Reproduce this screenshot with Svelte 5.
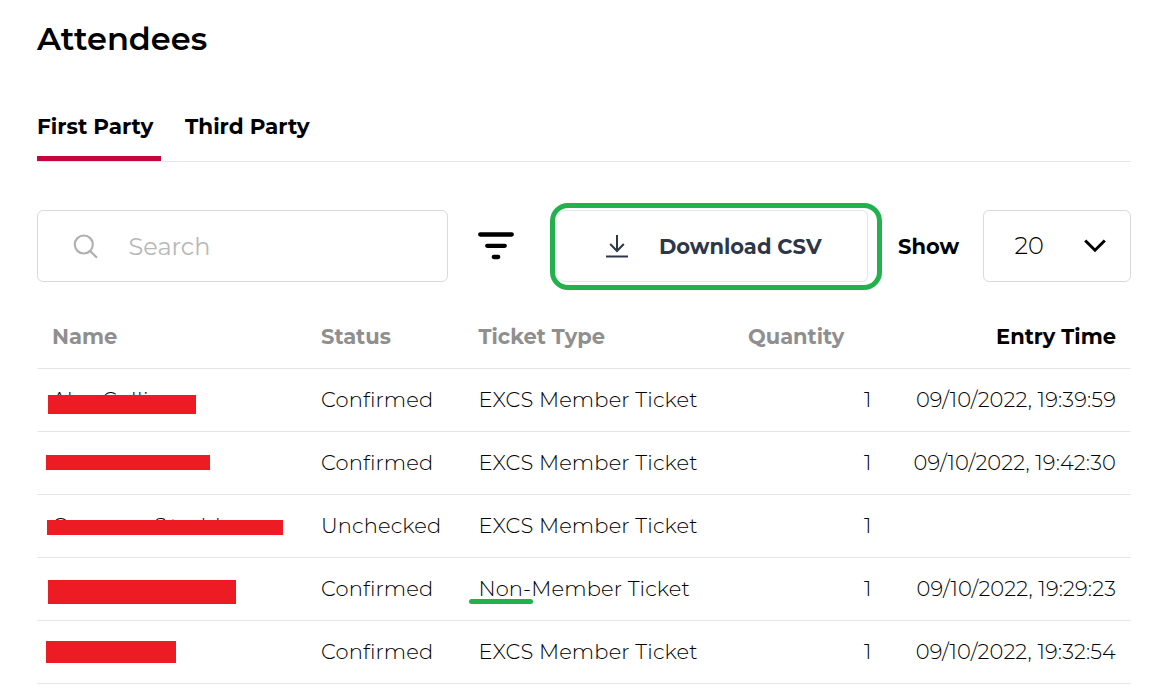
<script>
  const columns = [
    { label: 'Name', width: 269 },
    { label: 'Status', width: 157.5 },
    { label: 'Ticket Type', width: 269.5 },
    { label: 'Quantity', width: 154 },
    { label: 'Entry Time', width: 244 }
  ];

  const rows = [
    {
      mask: { x: 11, y: 26, w: 148, h: 19 },
      parts: [['A', 15], ['l', 35], ['C', 29], ['l', 6], ['l', 6], ['i', 8]],
      status: 'Confirmed', ticket: 'EXCS Member Ticket', time: '09/10/2022, 19:39:59'
    },
    {
      mask: { x: 9, y: 23, w: 164, h: 15 },
      parts: [],
      status: 'Confirmed', ticket: 'EXCS Member Ticket', time: '09/10/2022, 19:42:30'
    },
    {
      mask: { x: 10, y: 25, w: 236, h: 15 },
      parts: [['C', 102], ['S', 16], ['t', 22], ['d', 23], ['l', 6]],
      status: 'Unchecked', ticket: 'EXCS Member Ticket', time: ''
    },
    {
      mask: { x: 11, y: 22, w: 188, h: 24 },
      parts: [],
      status: 'Confirmed', ticket: 'Non-Member Ticket', marked: true, time: '09/10/2022, 19:29:23'
    },
    {
      mask: { x: 9, y: 20, w: 130, h: 22 },
      parts: [],
      status: 'Confirmed', ticket: 'EXCS Member Ticket', time: '09/10/2022, 19:32:54'
    }
  ];
</script>

<main>
  <h1>Attendees</h1>

  <nav>
    <button class="tab active">First Party</button>
    <button class="tab">Third Party</button>
  </nav>

  <section class="toolbar">
    <div class="search">
      <svg width="26" height="26" viewBox="0 0 26 26" fill="none" stroke="#b0b0b0" stroke-width="2.2">
        <circle cx="10.8" cy="10.5" r="9" /><path d="M17 17L24 23.8" />
      </svg>
      <span>Search</span>
    </div>
    <svg class="filter" width="38" height="30" viewBox="0 0 38 30" stroke="#000" stroke-width="4.3" stroke-linecap="round">
      <path d="M3.2 4.5H34.8M10.2 15.8H27.8M16.8 27H21.2" />
    </svg>
    <div class="highlight">
      <button class="download">
        <svg width="22" height="24" viewBox="0 0 22 24" fill="none" stroke="#2d3748" stroke-width="2">
          <path d="M11 1V17M4.2 10L11 17L17.8 10M0 22.4H22" />
        </svg>
        <span>Download CSV</span>
      </button>
    </div>
    <span class="show">Show</span>
    <div class="select">
      <span>20</span>
      <svg width="22" height="14" viewBox="0 0 22 14" fill="none" stroke="#000" stroke-width="3">
        <path d="M1.2 1.5L11 11.2L20.8 1.5" />
      </svg>
    </div>
  </section>

  <table>
    <colgroup>
      {#each columns as c}<col style="width: {c.width}px" />{/each}
    </colgroup>
    <thead>
      <tr>
        {#each columns as c}<th>{c.label}</th>{/each}
      </tr>
    </thead>
    <tbody>
      {#each rows as r}
        <tr>
          <td class="name">
            <span class="parts">{#each r.parts as [letter, width]}<i style="width: {width}px">{letter}</i>{/each}</span>
            <span class="mask" style="left: {r.mask.x}px; top: {r.mask.y}px; width: {r.mask.w}px; height: {r.mask.h}px"></span>
          </td>
          <td>{r.status}</td>
          <td class="ticket" class:marked={r.marked}>{r.ticket}</td>
          <td class="qty">1</td>
          <td class="time">{r.time}</td>
        </tr>
      {/each}
    </tbody>
  </table>
</main>

<style>
  :global(body) { background: #fff; overflow: hidden; }
  main {
    box-sizing: border-box;
    width: 1158px;
    height: 690px;
    overflow: hidden;
    padding: 19px 27px 0 37px;
    font-family: Montserrat, Inter, sans-serif;
    font-size: 21px;
    font-weight: 300;
    color: #000;
  }
  button { font: inherit; color: inherit; background: none; border: 0; padding: 0; white-space: nowrap; }
  h1 { margin: 0; font-size: 32px; line-height: 40px; font-weight: 600; }
  nav {
    display: flex;
    gap: 16px;
    height: 68px;
    margin-top: 34px;
    border-bottom: 1px solid #e6e6e6;
  }
  .tab {
    display: flex;
    box-sizing: border-box;
    height: 68px;
    padding: 20px 8px 0;
    line-height: 26px;
    font-size: 21.5px;
    font-weight: 700;
    border-bottom: 5px solid transparent;
  }
  .tab.active { width: 124px; padding-left: 0; border-color: #c3063d; }
  .toolbar { display: flex; align-items: flex-start; height: 87px; margin-top: 41px; }
  .search {
    display: flex;
    align-items: center;
    gap: 29.5px;
    box-sizing: border-box;
    width: 411px;
    height: 72px;
    margin-top: 7px;
    padding-left: 35px;
    border: 1px solid #dadada;
    border-radius: 6px;
    font-size: 24px;
    font-weight: 400;
    color: #b8b8b8;
  }
  .search svg { margin-top: 1px; }
  .filter { margin: 27px 0 0 29px; }
  .highlight {
    box-sizing: border-box;
    width: 332px;
    height: 87px;
    margin-left: 35px;
    border: 5px solid #22b14c;
    border-radius: 18px;
    padding: 2px 9px 3px 0;
  }
  .download {
    display: flex;
    align-items: center;
    width: 313px;
    height: 72px;
    box-sizing: border-box;
    padding-left: 51px;
    gap: 31px;
    border: 1px solid #e2e6ee;
    border-left: 0;
    border-radius: 12px 6px 6px 12px;
    color: #2d3748;
    font-weight: 700;
  }
  .show { width: 85px; margin-left: 16px; line-height: 88px; font-weight: 700; }
  .select {
    display: flex;
    align-items: center;
    justify-content: space-between;
    box-sizing: border-box;
    width: 148px;
    height: 72px;
    margin-top: 7px;
    padding: 0 24px 0 30.5px;
    border: 1px solid #dadada;
    border-radius: 6px;
    font-size: 24px;
  }
  .select span { margin-top: -1px; }
  table { width: 1094px; table-layout: fixed; border-collapse: separate; border-spacing: 0; margin-top: 14px; }
  th, td {
    box-sizing: border-box;
    padding: 0 15px;
    text-align: left;
    white-space: nowrap;
    border-bottom: 1px solid #e6e6e6;
  }
  th { height: 65px; font-weight: 700; color: #8f8f8f; }
  th:last-child { text-align: right; color: #000; }
  td { height: 63px; padding-bottom: 2px; letter-spacing: 0.15px; }
  .ticket { padding-left: 14.9px; }
  .qty { text-align: right; padding-right: 15.5px; }
  .time { text-align: right; }
  .name, .marked { position: relative; }
  .parts { display: block; overflow: hidden; height: 24px; line-height: 26px; }
  .parts i { display: inline-block; font-style: normal; }
  .mask { position: absolute; background: #ed1c24; }
  .marked::after {
    content: '';
    position: absolute;
    left: 5px;
    top: 41px;
    width: 64px;
    height: 5px;
    border-radius: 2.5px;
    background: #22b14c;
  }
</style>
